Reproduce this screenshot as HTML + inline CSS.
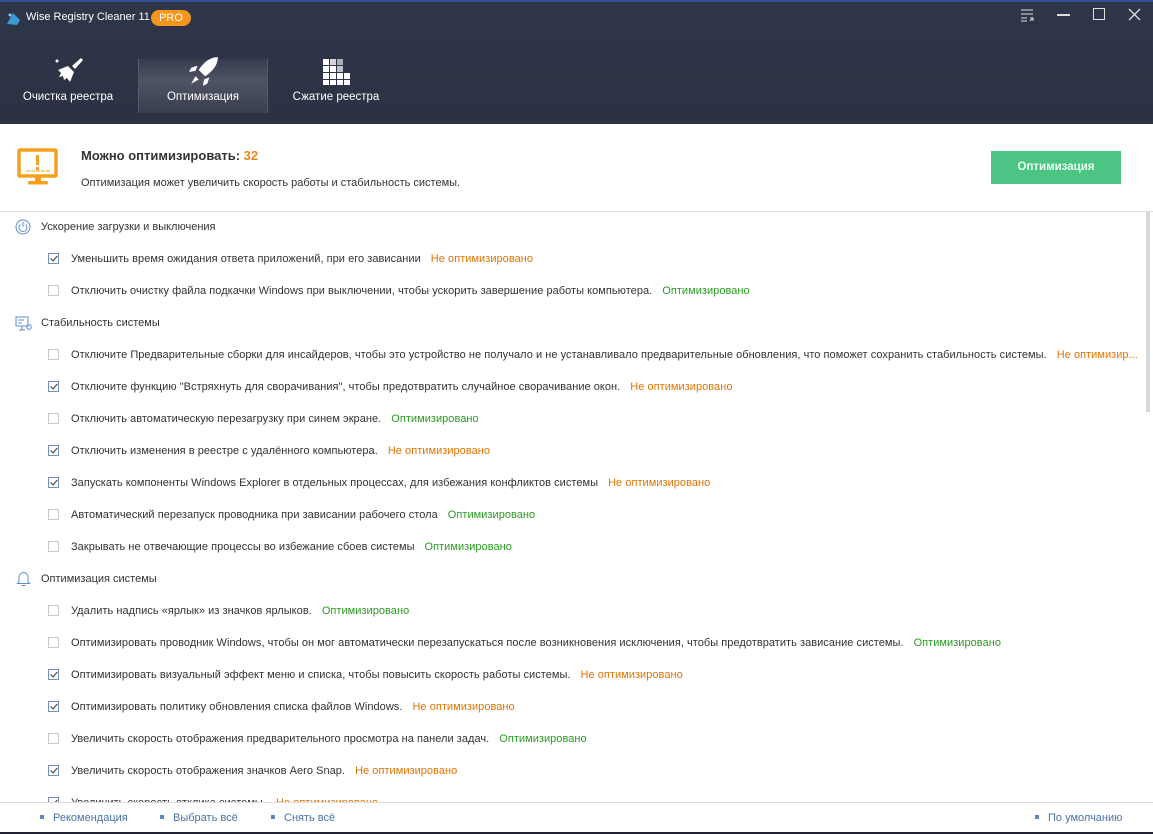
<!DOCTYPE html>
<html><head><meta charset="utf-8"><style>
*{margin:0;padding:0;box-sizing:border-box}
body{width:1153px;height:834px;overflow:hidden;background:#fff;font-family:"Liberation Sans","DejaVu Sans",sans-serif;position:relative;color:#333}
.hdr{position:absolute;left:0;top:0;width:1153px;height:124px;background:linear-gradient(180deg,#30364a,#2c3244);border-top:2px solid #3a4f9a}
.title{position:absolute;left:26px;top:9px;color:#fff;font-size:11px}
.pro{position:absolute;left:151px;top:8px;width:40px;height:16px;border-radius:8px;background:#f4951c;color:#fff;font-size:11px;text-align:center;line-height:16px}
.tab{position:absolute;top:57px;width:130px;height:54px;color:#fff;font-size:11.5px;text-align:center}
.tab span{position:absolute;left:0;right:0;top:32px}
.act{background:linear-gradient(180deg,rgba(255,255,255,0.04),rgba(255,255,255,0.16) 40%,rgba(255,255,255,0.06));border-left:1px solid #555b6b;border-right:1px solid #555b6b}
.abs{position:absolute}
.row{position:absolute;left:0;font-size:11px;white-space:nowrap;color:#333;letter-spacing:0.04px}
.cb{position:absolute;left:48px;width:11px;height:11px;border:1px solid #c8c8c8;background:#fff}
.cb.on{border-color:#7a8fb8}
.cb.on:after{content:"";position:absolute;left:3px;top:0px;width:3px;height:6px;border:solid #333;border-width:0 1.5px 1.5px 0;transform:rotate(40deg)}
.o{color:#e07400;margin-left:10px}.g{color:#2a9a20;margin-left:10px}
.sec{position:absolute;left:41px;font-size:11px;color:#333}
.ft{position:absolute;top:812px;font-size:11px;color:#4a72a8}
.ft:before{content:"";display:inline-block;width:4px;height:4px;background:#5a88b8;margin-right:9px;vertical-align:2px}
</style></head><body>
<div class="hdr">
 <svg class="abs" style="left:5px;top:8px" width="17" height="17" viewBox="0 0 17 17"><path d="M2 14 L8 3 L15 10 L12 15 Z" fill="#3b9bd8"/><circle cx="5" cy="5" r="1.5" fill="#8cc8f0"/></svg>
 <div class="title">Wise Registry Cleaner 11</div><div class="pro">PRO</div>
 <svg class="abs" style="left:1020px;top:6px" width="14" height="14" viewBox="0 0 14 14" stroke="#ddd" fill="none"><path d="M1 2H13M1 6H13M1 10H7M1 13H7M10 13L13 10M10 10H13V13"/></svg>
 <div class="abs" style="left:1057px;top:12px;width:13px;height:2px;background:#ddd"></div>
 <div class="abs" style="left:1093px;top:6px;width:12px;height:12px;border:1.5px solid #ddd"></div>
 <svg class="abs" style="left:1128px;top:6px" width="13" height="13" viewBox="0 0 13 13" stroke="#ddd" stroke-width="1.3"><path d="M1 1L12 12M12 1L1 12"/></svg>
 <div class="tab" style="left:3px"><svg class="abs" style="left:51px;top:-2px" width="30" height="28" viewBox="0 0 30 26" fill="#fff"><circle cx="3" cy="3" r="1.5"/><path d="M18 8 L27 0 L29 2 L21 11 Z"/><path d="M4 12 L14 8 L20 14 L16 24 L13 20 L10 22 L9 18 L5 19 L7 15 Z"/></svg><span>Очистка реестра</span></div>
 <div class="tab act" style="left:138px"><svg class="abs" style="left:49px;top:-2px" width="32" height="30" viewBox="0 0 30 28" fill="#fff"><path d="M28 0 C20 0 14 6 10 12 L16 18 C22 14 28 8 28 0 Z"/><path d="M9 8 L3 10 L1 14 L7 13 Z M20 19 L18 25 L14 27 L15 21 Z M7 18 L3 25 L10 21 Z"/></svg><span>Оптимизация</span></div>
 <div class="tab" style="left:271px"><svg class="abs" style="left:52px;top:0" width="27" height="26" viewBox="0 0 27 26" fill="#fff"><rect x="0" y="0" width="6" height="6"/><rect x="7" y="0" width="6" height="6" opacity=".8"/><rect x="14" y="0" width="6" height="6" opacity=".6"/><rect x="0" y="7" width="6" height="6"/><rect x="7" y="7" width="6" height="6"/><rect x="14" y="7" width="6" height="6" opacity=".7"/><rect x="0" y="14" width="6" height="6"/><rect x="7" y="14" width="6" height="6"/><rect x="14" y="14" width="6" height="6"/><rect x="21" y="14" width="6" height="6"/><rect x="0" y="21" width="6" height="5"/><rect x="7" y="21" width="6" height="5"/><rect x="14" y="21" width="6" height="5"/><rect x="21" y="21" width="6" height="5"/></svg><span>Сжатие реестра</span></div>
</div>
<svg class="abs" style="left:17px;top:148px" width="42" height="40" viewBox="0 0 42 40"><rect x="2" y="2" width="37" height="26" rx="1" fill="none" stroke="#f5a020" stroke-width="3.5"/><rect x="19" y="7" width="3" height="10" fill="#f5a020"/><rect x="19" y="19" width="3" height="3" fill="#f5a020"/><path d="M9 23H33" stroke="#f5a020" stroke-dasharray="4 1"/><rect x="18" y="28" width="6" height="5" fill="#f5a020"/><rect x="11" y="33" width="20" height="3.5" rx="1.5" fill="#f5a020"/></svg>
<div class="abs" style="left:81px;top:148px;font-size:13px;font-weight:bold;color:#333">Можно оптимизировать: <span style="color:#e5861a">32</span></div>
<div class="abs" style="left:81px;top:177px;font-size:11px">Оптимизация может увеличить скорость работы и стабильность системы.</div>
<div class="abs" style="left:991px;top:151px;width:130px;height:33px;background:#4cc584;color:#eafff2;font-size:11.5px;font-weight:bold;text-align:center;line-height:33px">Оптимизация</div>
<div class="abs" style="left:0;top:211px;width:1153px;height:1px;background:#e2e2e2"></div>

<svg class="abs" style="left:15px;top:219px" width="16" height="16" viewBox="0 0 16 16" fill="none" stroke="#5b8fc8"><circle cx="8" cy="8" r="7"/><path d="M5.5 5.5A4 4 0 1 0 10.5 5.5M8 3V8"/></svg>
<div class="sec" style="top:221px">Ускорение загрузки и выключения</div>
<svg class="abs" style="left:15px;top:316px" width="18" height="16" viewBox="0 0 18 16" fill="none" stroke="#5b8fc8"><rect x="1" y="1" width="12" height="9"/><path d="M3 4H9M3 7H7M7 10V14M4 14H10"/><circle cx="14" cy="11" r="2.3"/></svg>
<div class="sec" style="top:317px">Стабильность системы</div>
<svg class="abs" style="left:16px;top:571px" width="15" height="16" viewBox="0 0 15 16" fill="none" stroke="#5b8fc8"><path d="M3 11V6A4.5 4.5 0 0 1 12 6V11L13.5 12.5H1.5Z M5.5 14.5H9.5"/></svg>
<div class="sec" style="top:573px">Оптимизация системы</div>

<div class="cb on" style="top:253px"></div><div class="row" style="left:71px;top:253px">Уменьшить время ожидания ответа приложений, при его зависании<span class="o">Не оптимизировано</span></div>
<div class="cb" style="top:285px"></div><div class="row" style="left:71px;top:285px">Отключить очистку файла подкачки Windows при выключении, чтобы ускорить завершение работы компьютера.<span class="g">Оптимизировано</span></div>
<div class="cb" style="top:349px"></div><div class="row" style="left:71px;top:349px">Отключите Предварительные сборки для инсайдеров, чтобы это устройство не получало и не устанавливало предварительные обновления, что поможет сохранить стабильность системы.<span class="o">Не оптимизир...</span></div>
<div class="cb on" style="top:381px"></div><div class="row" style="left:71px;top:381px">Отключите функцию "Встряхнуть для сворачивания", чтобы предотвратить случайное сворачивание окон.<span class="o">Не оптимизировано</span></div>
<div class="cb" style="top:413px"></div><div class="row" style="left:71px;top:413px">Отключить автоматическую перезагрузку при синем экране.<span class="g">Оптимизировано</span></div>
<div class="cb on" style="top:445px"></div><div class="row" style="left:71px;top:445px">Отключить изменения в реестре с удалённого компьютера.<span class="o">Не оптимизировано</span></div>
<div class="cb on" style="top:477px"></div><div class="row" style="left:71px;top:477px">Запускать компоненты Windows Explorer в отдельных процессах, для избежания конфликтов системы<span class="o">Не оптимизировано</span></div>
<div class="cb" style="top:509px"></div><div class="row" style="left:71px;top:509px">Автоматический перезапуск проводника при зависании рабочего стола<span class="g">Оптимизировано</span></div>
<div class="cb" style="top:541px"></div><div class="row" style="left:71px;top:541px">Закрывать не отвечающие процессы во избежание сбоев системы<span class="g">Оптимизировано</span></div>
<div class="cb" style="top:605px"></div><div class="row" style="left:71px;top:605px">Удалить надпись «ярлык» из значков ярлыков.<span class="g">Оптимизировано</span></div>
<div class="cb" style="top:637px"></div><div class="row" style="left:71px;top:637px">Оптимизировать проводник Windows, чтобы он мог автоматически перезапускаться после возникновения исключения, чтобы предотвратить зависание системы.<span class="g">Оптимизировано</span></div>
<div class="cb on" style="top:669px"></div><div class="row" style="left:71px;top:669px">Оптимизировать визуальный эффект меню и списка, чтобы повысить скорость работы системы.<span class="o">Не оптимизировано</span></div>
<div class="cb on" style="top:701px"></div><div class="row" style="left:71px;top:701px">Оптимизировать политику обновления списка файлов Windows.<span class="o">Не оптимизировано</span></div>
<div class="cb" style="top:733px"></div><div class="row" style="left:71px;top:733px">Увеличить скорость отображения предварительного просмотра на панели задач.<span class="g">Оптимизировано</span></div>
<div class="cb on" style="top:765px"></div><div class="row" style="left:71px;top:765px">Увеличить скорость отображения значков Aero Snap.<span class="o">Не оптимизировано</span></div>
<div class="cb on" style="top:797px"></div><div class="row" style="left:71px;top:797px">Увеличить скорость отклика системы.<span class="o">Не оптимизировано</span></div>

<div class="abs" style="left:1143px;top:212px;width:10px;height:590px;background:#fff"></div>
<div class="abs" style="left:1146px;top:212px;width:4px;height:200px;background:#d8d8d8"></div>
<div class="abs" style="left:0;top:802px;width:1153px;height:32px;background:#fff;border-top:1px solid #dcdcdc"></div>
<div class="ft" style="left:40px">Рекомендация</div>
<div class="ft" style="left:160px">Выбрать всё</div>
<div class="ft" style="left:271px">Снять всё</div>
<div class="ft" style="left:1035px">По умолчанию</div>
<div class="abs" style="left:0;top:832px;width:1153px;height:2px;background:#1e2233"></div>
</body></html>
